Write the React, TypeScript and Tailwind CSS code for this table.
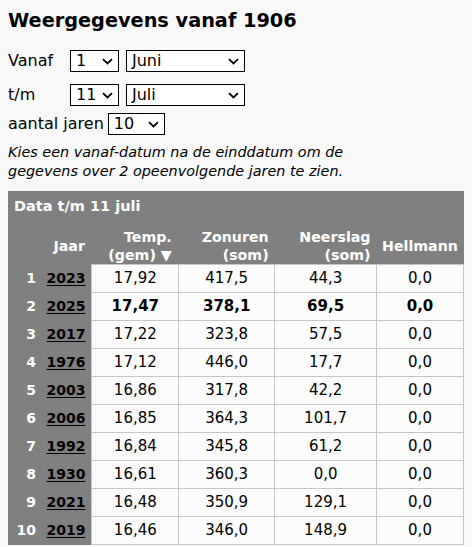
import React from "react";

const rows = [
  { n: 1, jaar: "2023", temp: "17,92", zon: "417,5", neer: "44,3", hell: "0,0" },
  { n: 2, jaar: "2025", temp: "17,47", zon: "378,1", neer: "69,5", hell: "0,0", bold: true },
  { n: 3, jaar: "2017", temp: "17,22", zon: "323,8", neer: "57,5", hell: "0,0" },
  { n: 4, jaar: "1976", temp: "17,12", zon: "446,0", neer: "17,7", hell: "0,0" },
  { n: 5, jaar: "2003", temp: "16,86", zon: "317,8", neer: "42,2", hell: "0,0" },
  { n: 6, jaar: "2006", temp: "16,85", zon: "364,3", neer: "101,7", hell: "0,0" },
  { n: 7, jaar: "1992", temp: "16,84", zon: "345,8", neer: "61,2", hell: "0,0" },
  { n: 8, jaar: "1930", temp: "16,61", zon: "360,3", neer: "0,0", hell: "0,0" },
  { n: 9, jaar: "2021", temp: "16,48", zon: "350,9", neer: "129,1", hell: "0,0" },
  { n: 10, jaar: "2019", temp: "16,46", zon: "346,0", neer: "148,9", hell: "0,0" },
];

function Select({ value, width }: { value: string; width: string }) {
  return (
    <div className={`relative h-[22px] ${width} border border-black bg-white flex items-center pl-[5px] text-[16px] leading-none`}>
      <span>{value}</span>
      <svg className="absolute right-[5px] top-[7px]" width="11" height="7" viewBox="0 0 11 7">
        <path d="M1 1.2 L5.5 5.5 L10 1.2" fill="none" stroke="#000" strokeWidth="1.8" />
      </svg>
    </div>
  );
}

export default function App() {
  return (
    <div className="min-h-[547px] bg-[#f8f8f8] px-[8px] pt-[9px] text-black" style={{ fontFamily: '"DejaVu Sans", Verdana, sans-serif' }}>
      <h1 className="text-[19.3px] font-bold leading-[24px]">Weergegevens vanaf 1906</h1>

      <div className="mt-[17px] flex items-center h-[22px] text-[16px]">
        <span className="w-[62px]">Vanaf</span>
        <Select value="1" width="w-[49px]" />
        <div className="w-[7px]" />
        <Select value="Juni" width="w-[119px]" />
      </div>
      <div className="mt-[12px] flex items-center h-[22px] text-[16px]">
        <span className="w-[62px]">t/m</span>
        <Select value="11" width="w-[49px]" />
        <div className="w-[7px]" />
        <Select value="Juli" width="w-[119px]" />
      </div>
      <div className="mt-[7px] flex items-center h-[22px] text-[16px]">
        <span className="mr-[4px]">aantal jaren</span>
        <Select value="10" width="w-[57px]" />
      </div>

      <p className="mt-[8px] text-[14.4px] italic leading-[19px]">
        Kies een vanaf-datum na de einddatum om de
        <br />
        gegevens over 2 opeenvolgende jaren te zien.
      </p>

      <table className="mt-[10px] w-[456px] border-collapse bg-[#808080] text-[15px]">
        <caption className="bg-[#808080] text-left text-white font-bold text-[14.5px] pl-[6px] pt-[5px] pb-[4px]">
          Data t/m 11 juli
        </caption>
        <thead>
          <tr className="text-white font-bold text-[14.2px] leading-[18px]">
            <th className="w-[30px]"></th>
            <th className="w-[54px] text-right pr-[7px] pt-[6px]">Jaar</th>
            <th className="w-[87px] text-right pr-[7px] pt-[6px] font-bold">
              Temp.
              <br />
              (gem) ▼
            </th>
            <th className="w-[96px] text-right pr-[6px] pt-[6px]">
              Zonuren
              <br />
              (som)
            </th>
            <th className="w-[102px] text-right pr-[6px] pt-[6px]">
              Neerslag
              <br />
              (som)
            </th>
            <th className="w-[87px] text-center pt-[6px]">Hellmann</th>
          </tr>
        </thead>
        <tbody>
          {rows.map((r) => (
            <tr key={r.n} className={`h-[28px] ${r.bold ? "font-bold" : ""}`}>
              <th className="text-right pr-[2px] text-white font-bold text-[14px]">{r.n}</th>
              <th className="text-right pr-[6px] font-bold text-[14px]">
                <span className="underline underline-offset-[2px]">{r.jaar}</span>
              </th>
              <td className="bg-[#fcfcfc] border border-[#c6c6c6] text-center">{r.temp}</td>
              <td className="bg-[#fcfcfc] border border-[#c6c6c6] text-center">{r.zon}</td>
              <td className="bg-[#fcfcfc] border border-[#c6c6c6] text-center">{r.neer}</td>
              <td className="bg-[#fcfcfc] border border-[#c6c6c6] text-center">{r.hell}</td>
            </tr>
          ))}
        </tbody>
      </table>
    </div>
  );
}
